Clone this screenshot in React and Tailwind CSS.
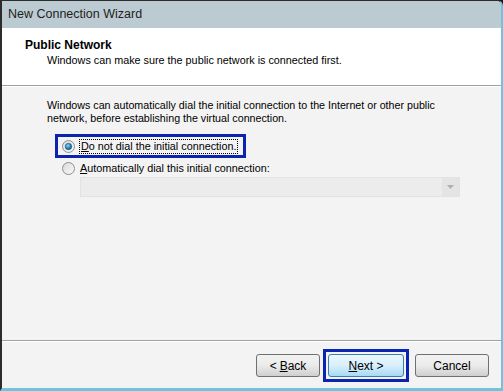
import React from "react";

function Radio({ checked }) {
  return (
    <svg width="13" height="13" viewBox="0 0 13 13" className="shrink-0">
      <defs>
        <linearGradient id={checked ? "rg1" : "rg2"} x1="0" y1="0" x2="1" y2="1">
          <stop offset="0" stopColor="#d8d8d8" />
          <stop offset="1" stopColor="#fbfbfb" />
        </linearGradient>
        <radialGradient id="dot" cx="0.4" cy="0.35" r="0.7">
          <stop offset="0" stopColor="#8fd3f5" />
          <stop offset="0.6" stopColor="#1a86c4" />
          <stop offset="1" stopColor="#0c4f7e" />
        </radialGradient>
      </defs>
      <circle cx="6.5" cy="6.5" r="6" fill={`url(#${checked ? "rg1" : "rg2"})`} stroke="#8e8f8f" strokeWidth="1" />
      {checked && <circle cx="6.5" cy="6.5" r="3.2" fill="url(#dot)" stroke="#1e4f78" strokeWidth="0.6" />}
    </svg>
  );
}

function Btn({ children, focused }) {
  return (
    <div
      className={`h-[23px] flex items-center justify-center rounded-[3px] border text-[12px] text-black ${
        focused
          ? "border-[#3c7fb1] bg-gradient-to-b from-[#eaf6fd] via-[#d9f0fc] to-[#a7d9f5]"
          : "border-[#707070] bg-gradient-to-b from-[#f2f2f2] via-[#ebebeb] to-[#cfcfcf]"
      }`}
    >
      {children}
    </div>
  );
}

export default function App() {
  return (
    <div className="w-[503px] h-[391px] bg-[#1b1b1b] font-['Liberation_Sans',Arial,sans-serif] text-black">
      <div className="w-[503px] h-[391px] rounded-tr-[6px] border-l-[2px] border-t-[1px] border-r-[2px] border-b-[3px] border-l-[#2c2c2c] border-t-[#2c2c2c] border-r-[#6fc3dd] border-b-[#6fc3dd] flex flex-col overflow-hidden bg-[#bccbd1]">
        <div className="h-[27px] shrink-0 bg-[#bccbd1] flex items-center pl-[6px] text-[12.5px] text-[#1e1e1e]">
          New Connection Wizard
        </div>
        <div className="h-[58px] shrink-0 bg-white border-b border-[#a0a0a0] pl-[23px] pt-[10px]">
          <div className="text-[12px] font-bold leading-[15px]">Public Network</div>
          <div className="pl-[22px] text-[10.8px] leading-[15px] whitespace-nowrap">
            Windows can make sure the public network is connected first.
          </div>
        </div>
        <div className="flex-1 bg-[#f3f3f3] flex flex-col border-t border-white">
          <div className="flex-1 pl-[45px] pt-[12px]">
            <div className="text-[10.7px] leading-[13px] w-[400px]">
              Windows can automatically dial the initial connection to the Internet or other public network, before establishing the virtual connection.
            </div>
            <div className="mt-[9px] ml-[8px] w-[191px] h-[24px] border-[3px] border-[#0a24b0] flex items-center pl-[4px] gap-[4px]">
              <Radio checked />
              <span className="text-[10.8px] leading-[13px] border border-dotted border-black px-[1px] whitespace-nowrap">
                <span className="underline">D</span>o not dial the initial connection.
              </span>
            </div>
            <div className="mt-[2px] ml-[15px] flex items-center gap-[5px] h-[16px]">
              <Radio />
              <span className="text-[10.8px] whitespace-nowrap">
                <span className="underline">A</span>utomatically dial this initial connection:
              </span>
            </div>
            <div className="mt-[1px] ml-[33px] w-[380px] h-[20px] bg-[#ececec] border border-[#e2e2e2] flex">
              <div className="flex-1" />
              <div className="w-[17px] bg-[#e4e4e4] flex items-center justify-center">
                <svg width="7" height="4" viewBox="0 0 7 4"><path d="M0 0h7L3.5 4z" fill="#b0b0b0" /></svg>
              </div>
            </div>
          </div>
          <div className="h-[48px] shrink-0 border-t border-[#a0a0a0] shadow-[inset_0_1px_0_#ffffff] flex items-start justify-end pr-[12px] pt-[13px]">
            <div className="w-[64px]">
              <Btn>
                &lt; <span className="underline ml-[3px]">B</span>ack
              </Btn>
            </div>
            <div className="ml-[3px] -mt-[5px] w-[86px] h-[33px] border-[3px] border-[#0a24b0] p-[2px]">
              <Btn focused>
                <span className="underline">N</span>ext &gt;
              </Btn>
            </div>
            <div className="ml-[6px] w-[74px]">
              <Btn>Cancel</Btn>
            </div>
          </div>
        </div>
      </div>
    </div>
  );
}
